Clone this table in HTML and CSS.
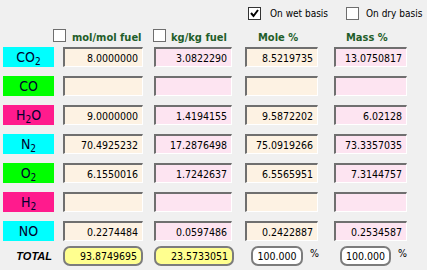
FILE: index.html
```html
<!DOCTYPE html>
<html>
<head>
<meta charset="utf-8">
<link rel="stylesheet" href="styles.css">
</head>
<body>
<div class="app">
  <div class="basis">
    <div class="opt opt-wet"><span class="cb cb-on"><svg width="11" height="11" viewBox="0 0 11 11"><polyline points="2,5 4.5,8 9,2" fill="none" stroke="#000" stroke-width="2"/></svg></span><span>On wet basis</span></div>
    <div class="opt"><span class="cb"></span><span>On dry basis</span></div>
  </div>
  <div class="heads">
    <div class="head hc1"><span class="cb"></span><span class="ht">mol/mol fuel</span></div>
    <div class="head hc2"><span class="cb"></span><span class="ht">kg/kg fuel</span></div>
    <div class="head hc3"><span class="ht">Mole %</span></div>
    <div class="head hc4"><span class="ht">Mass %</span></div>
  </div>
  <div class="grid">
    <div class="lbl cyan"><span>CO<sub>2</sub></span></div>
    <div class="fld cream">8.0000000</div>
    <div class="fld pink w2">3.0822290</div>
    <div class="fld cream w3">8.5219735</div>
    <div class="fld pink w3">13.0750817</div>

    <div class="lbl green"><span>CO</span></div>
    <div class="fld cream"></div>
    <div class="fld pink w2"></div>
    <div class="fld cream w3"></div>
    <div class="fld pink w3"></div>

    <div class="lbl magenta"><span>H<sub>2</sub>O</span></div>
    <div class="fld cream">9.0000000</div>
    <div class="fld pink w2">1.4194155</div>
    <div class="fld cream w3">9.5872202</div>
    <div class="fld pink w3">6.02128</div>

    <div class="lbl cyan"><span>N<sub>2</sub></span></div>
    <div class="fld cream">70.4925232</div>
    <div class="fld pink w2">17.2876498</div>
    <div class="fld cream w3">75.0919266</div>
    <div class="fld pink w3">73.3357035</div>

    <div class="lbl green"><span>O<sub>2</sub></span></div>
    <div class="fld cream">6.1550016</div>
    <div class="fld pink w2">1.7242637</div>
    <div class="fld cream w3">6.5565951</div>
    <div class="fld pink w3">7.3144757</div>

    <div class="lbl magenta"><span>H<sub>2</sub></span></div>
    <div class="fld cream"></div>
    <div class="fld pink w2"></div>
    <div class="fld cream w3"></div>
    <div class="fld pink w3"></div>

    <div class="lbl cyan"><span>NO</span></div>
    <div class="fld cream">0.2274484</div>
    <div class="fld pink w2">0.0597486</div>
    <div class="fld cream w3">0.2422887</div>
    <div class="fld pink w3">0.2534587</div>
  </div>
  <div class="grid totals">
    <div class="tlabel">TOTAL</div>
    <div class="tot">93.8749695</div>
    <div class="tot w2">23.5733051</div>
    <div class="pct"><span class="tot100">100.000</span><span class="psign">%</span></div>
    <div class="pct"><span class="tot100">100.000</span><span class="psign">%</span></div>
  </div>
</div>
</body>
</html>
```

FILE: styles.css
```css
html, body {
  margin: 0;
  padding: 0;
  background: #f0f0f0;
}
body {
  width: 427px;
  height: 270px;
  overflow: hidden;
  font-family: "DejaVu Sans Condensed", "Liberation Sans", sans-serif;
  font-size: 11px;
  color: #000;
}
.app {
  display: flex;
  flex-direction: column;
}
.basis {
  height: 27px;
  box-sizing: border-box;
  padding-top: 7px;
  padding-left: 248px;
  display: flex;
  align-items: flex-start;
  font-size: 10px;
  white-space: nowrap;
}
.opt {
  display: flex;
  align-items: center;
  gap: 7px;
  height: 13px;
  flex: none;
}
.opt-wet {
  width: 98px;
  gap: 9px;
}
.cb {
  width: 13px;
  height: 13px;
  box-sizing: border-box;
  background: #fff;
  border: 1px solid #6e6e6e;
  display: inline-flex;
  align-items: center;
  justify-content: center;
  flex: none;
}
.cb-on {
  border-color: #333;
}
.heads {
  height: 20px;
  display: flex;
  align-items: flex-start;
  padding-top: 2px;
  box-sizing: border-box;
  padding-left: 53px;
  white-space: nowrap;
}
.head {
  display: flex;
  align-items: center;
  height: 13px;
  flex: none;
}
.ht {
  font-weight: bold;
  color: #1f5e2a;
  font-size: 11px;
  padding-top: 3px;
}
.hc1 { width: 100px; gap: 6px; }
.hc2 { width: 105px; gap: 5px; }
.hc3 { width: 88px; }
.hc4 { width: 70px; }
.grid {
  display: grid;
  grid-template-columns: 60px 91px 91px 89px 73px;
  grid-auto-rows: 20px;
  row-gap: 9px;
  padding-left: 3px;
}
.lbl {
  width: 51px;
  display: flex;
  align-items: center;
  justify-content: center;
  font-size: 14px;
  color: #00002e;
  white-space: nowrap;
}
.lbl sub {
  font-size: 10px;
  vertical-align: -3px;
  line-height: 0;
}
.cyan { background: #00ffff; }
.green { background: #00ff00; }
.magenta { background: #ff1b8d; }
.fld {
  width: 80px;
  box-sizing: border-box;
  border-style: solid;
  border-width: 2px 1px 1px 2px;
  border-color: #6f6f6f #ffffff #ffffff #6f6f6f;
  text-align: right;
  padding-right: 4px;
  font-size: 10.5px;
  line-height: 19px;
  white-space: nowrap;
}
.w2 { width: 78px; }
.w3 { width: 73px; }
.cream { background: #fdf2e3; }
.pink { background: #fde4f1; }
.totals {
  margin-top: 5px;
}
.tlabel {
  width: 51px;
  text-align: right;
  font-weight: bold;
  font-style: italic;
  font-family: "Liberation Sans", sans-serif;
  font-size: 11px;
  line-height: 20px;
  padding-right: 2px;
  box-sizing: border-box;
}
.tot {
  width: 80px;
  box-sizing: border-box;
  background: #ffff8f;
  border: 2px solid #7c7c7c;
  border-radius: 7px;
  text-align: right;
  padding-right: 4px;
  font-size: 10.5px;
  line-height: 16px;
}
.pct {
  display: flex;
  align-items: flex-start;
  padding-left: 6px;
}
.tot100 {
  width: 52px;
  height: 20px;
  box-sizing: border-box;
  background: #fff;
  border: 2px solid #7c7c7c;
  border-radius: 7px;
  text-align: center;
  font-size: 10.5px;
  line-height: 17px;
}
.psign {
  margin-left: 7px;
  font-size: 10.5px;
  line-height: 14px;
}
```
